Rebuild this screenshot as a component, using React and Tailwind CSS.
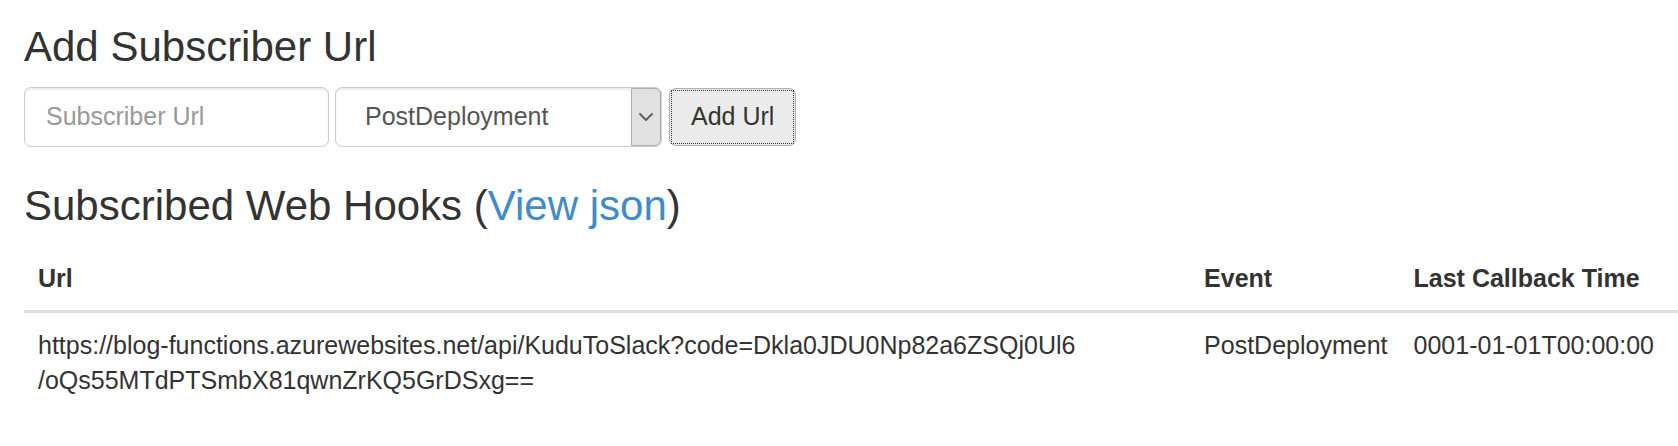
import { ChevronDown } from "lucide-react";

const hooks = [
  {
    url: ["https://blog-functions.azurewebsites.net/api/KuduToSlack?code=Dkla0JDU0Np82a6ZSQj0Ul6", "/oQs55MTdPTSmbX81qwnZrKQ5GrDSxg=="],
    event: "PostDeployment",
    time: "0001-01-01T00:00:00",
  },
];

export default function App() {
  return (
    <main className="min-h-screen bg-white pl-6 pt-6 font-['Liberation_Sans',Arial,sans-serif] text-[25px] leading-[35px] text-[#333]">
      <h3 className="text-[42px] leading-[46px]">Add Subscriber Url</h3>
      <form className="mt-[17px] flex items-center" onSubmit={(e) => e.preventDefault()}>
        <input
          type="text"
          aria-label="Subscriber Url"
          placeholder="Subscriber Url"
          className="h-[60px] w-[305px] rounded-[7px] border border-[#ccc] bg-white px-[21px] pb-0.5 text-[#555] shadow-[inset_0_2px_2px_rgba(0,0,0,0.075)] outline-none placeholder:text-[#999]"
        />
        <div className="relative ml-1.5 h-[60px] w-[327px]">
          <select
            aria-label="Event"
            className="h-full w-full appearance-none rounded-[7px] border border-[#ccc] bg-white pb-0.5 pl-[29px] pr-9 text-[#555] shadow-[inset_0_2px_2px_rgba(0,0,0,0.075)] outline-none"
          >
            <option>PostDeployment</option>
          </select>
          <span className="pointer-events-none absolute inset-y-px right-px flex w-[30px] items-center justify-center rounded-r-[6px] border border-[#adadad] bg-[#e1e1e1] text-[#606060]">
            <ChevronDown size={24} strokeWidth={2} className="shrink-0" />
          </span>
        </div>
        <button
          type="submit"
          className="ml-[7px] h-[58px] rounded-[7px] border border-[#adadad] bg-[#ebebeb] p-px text-[#333]"
        >
          <span className="flex h-full items-center border border-dotted border-[#333] px-[19px] pb-0.5">Add Url</span>
        </button>
      </form>
      <h3 className="mt-9 text-[42px] leading-[46px]">
        Subscribed Web Hooks (
        <a href="#json" className="text-[#428bca]">View json</a>)
      </h3>
      <table className="mt-[18px] w-full border-collapse text-left">
        <thead>
          <tr className="border-b-3 border-[#ddd]">
            <th className="px-3.5 py-3.5 font-bold">Url</th>
            <th className="py-3.5 pl-3.5 pr-3 font-bold">Event</th>
            <th className="px-3.5 py-3.5 font-bold">Last Callback Time</th>
          </tr>
        </thead>
        <tbody>
          {hooks.map((hook) => (
            <tr key={hook.time} className="align-top">
              <td className="w-full px-3.5 py-[15px]">{hook.url[0]}<br />{hook.url[1]}</td>
              <td className="py-[15px] pl-3.5 pr-3 whitespace-nowrap">{hook.event}</td>
              <td className="py-[15px] pl-3.5 pr-6 whitespace-nowrap">{hook.time}</td>
            </tr>
          ))}
        </tbody>
      </table>
    </main>
  );
}
